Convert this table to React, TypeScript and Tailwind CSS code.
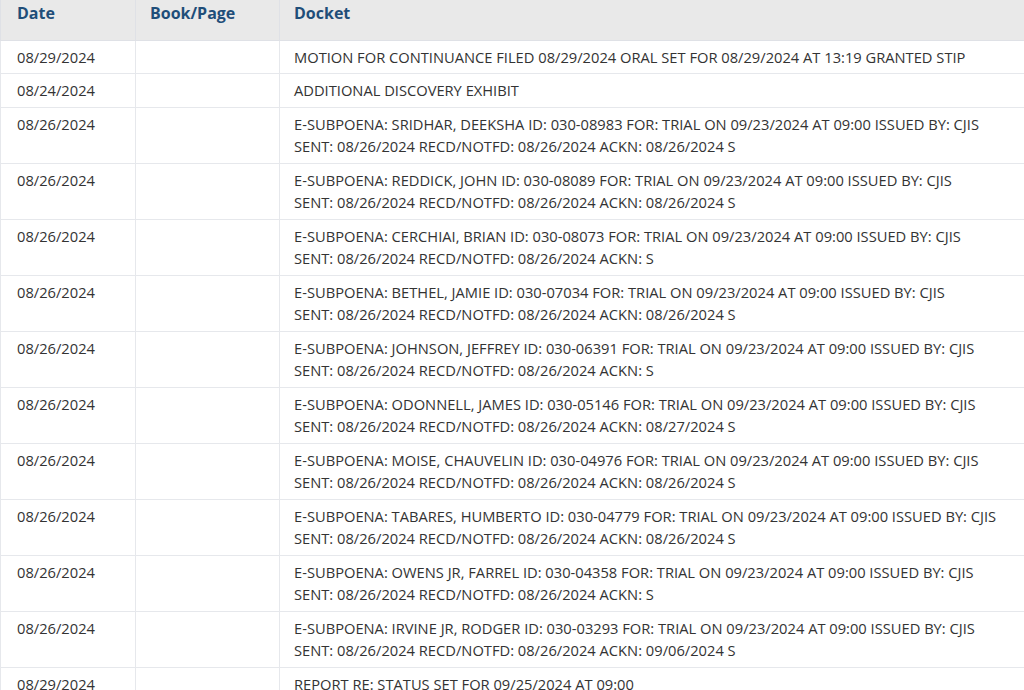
import React from 'react'

type Entry = { date: string; book?: string; docket: string; second?: string }

const subpoena = (name: string, id: string, ackn: string): Entry => ({
  date: '08/26/2024',
  docket: `E-SUBPOENA: ${name} ID: ${id} FOR: TRIAL ON 09/23/2024 AT 09:00 ISSUED BY: CJIS`,
  second: `SENT: 08/26/2024 RECD/NOTFD: 08/26/2024 ACKN: ${ackn}`,
})

const entries: Entry[] = [
  { date: '08/29/2024', docket: 'MOTION FOR CONTINUANCE FILED 08/29/2024 ORAL SET FOR 08/29/2024 AT 13:19 GRANTED STIP' },
  { date: '08/24/2024', docket: 'ADDITIONAL DISCOVERY EXHIBIT' },
  subpoena('SRIDHAR, DEEKSHA', '030-08983', '08/26/2024 S'),
  subpoena('REDDICK, JOHN', '030-08089', '08/26/2024 S'),
  subpoena('CERCHIAI, BRIAN', '030-08073', 'S'),
  subpoena('BETHEL, JAMIE', '030-07034', '08/26/2024 S'),
  subpoena('JOHNSON, JEFFREY', '030-06391', 'S'),
  subpoena('ODONNELL, JAMES', '030-05146', '08/27/2024 S'),
  subpoena('MOISE, CHAUVELIN', '030-04976', '08/26/2024 S'),
  subpoena('TABARES, HUMBERTO', '030-04779', '08/26/2024 S'),
  subpoena('OWENS JR, FARREL', '030-04358', 'S'),
  subpoena('IRVINE JR, RODGER', '030-03293', '09/06/2024 S'),
  { date: '08/29/2024', docket: 'REPORT RE: STATUS SET FOR 09/25/2024 AT 09:00' },
]

export default function App() {
  return (
    <div className="h-[690px] w-[1024px] overflow-hidden bg-white font-['Open_Sans',sans-serif] text-[14.7px] text-[#333]">
      <table className="w-full border-collapse table-fixed">
        <colgroup>
          <col className="w-[135px]" />
          <col className="w-[144px]" />
          <col />
        </colgroup>
        <thead>
          <tr className="h-10 bg-[#e9e9e9] text-left align-top">
            <th className="border-l border-r border-b border-[#dfe1e6] pl-4 pt-px text-[16px] font-bold text-[#1f4e79]">Date</th>
            <th className="border-r border-b border-[#dfe1e6] pl-[14px] pt-px text-[16px] font-bold text-[#1f4e79]">Book/Page</th>
            <th className="border-b border-[#dfe1e6] pl-[14px] pt-px text-[16px] font-bold text-[#1f4e79]">Docket</th>
          </tr>
        </thead>
        <tbody>
          {entries.map((e, i) => (
            <tr key={i} className="align-top leading-[22.5px]">
              <td className="border-l border-r border-b border-[#e6e8ec] pl-4 py-[5px]">{e.date}</td>
              <td className="border-r border-b border-[#e6e8ec] pl-[14px] py-[5px]">{e.book}</td>
              <td className="border-b border-[#e6e8ec] pl-[14px] pr-2 py-[5px] whitespace-nowrap">
                {e.docket}
                {e.second && (
                  <>
                    <br />
                    {e.second}
                  </>
                )}
              </td>
            </tr>
          ))}
        </tbody>
      </table>
    </div>
  )
}
